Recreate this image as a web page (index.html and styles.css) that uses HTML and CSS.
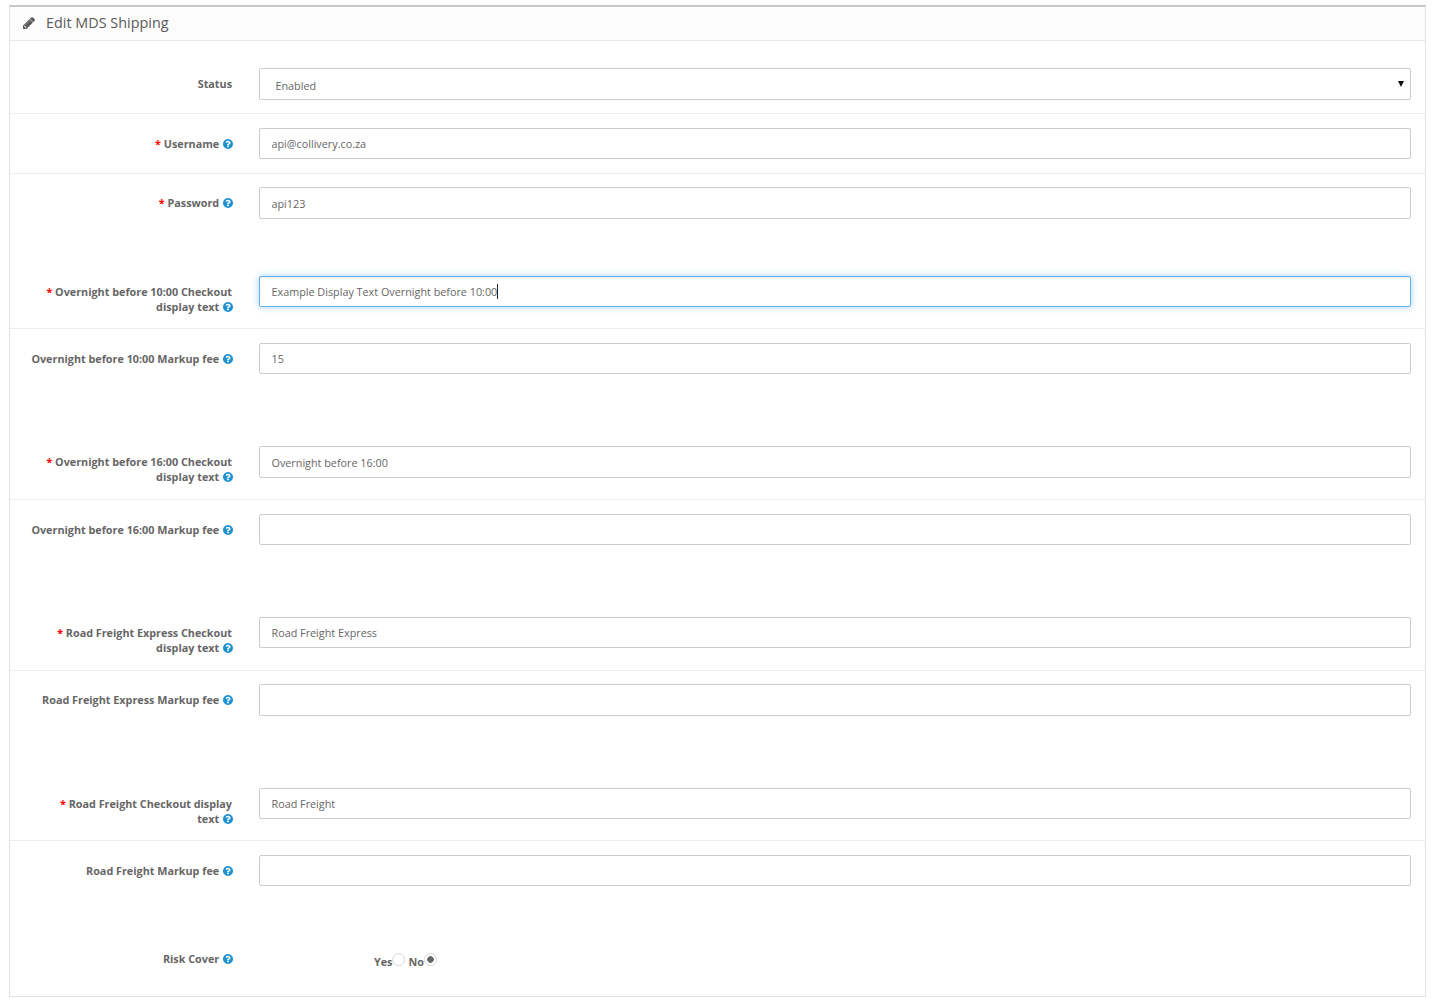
FILE: index.html
```html
<!DOCTYPE html>
<html lang="en">
<head>
<meta charset="utf-8">
<title>Edit MDS Shipping</title>
<link rel="stylesheet" href="styles.css">
</head>
<body>
<svg class="defs" width="0" height="0" aria-hidden="true">
  <symbol id="q" viewBox="128 128 1536 1536"><path d="M1024 1376v-192q0-14-9-23t-23-9h-192q-14 0-23 9t-9 23v192q0 14 9 23t23 9h192q14 0 23-9t9-23zm256-672q0-88-55.5-163t-138.5-116-170-41q-243 0-371 213-15 24 8 42l132 100q7 6 19 6 16 0 25-12 53-68 86-92 34-24 86-24 48 0 85.5 26t37.5 59q0 38-20 61t-68 45q-63 28-115.5 86.5t-52.5 125.5v36q0 14 9 23t23 9h192q14 0 23-9t9-23q0-19 21.5-49.5t54.5-49.5q32-18 49-28.5t46-35 44.5-48 28-60.5 12.5-81zm384 192q0 209-103 385.5t-279.5 279.5-385.5 103-385.5-103-279.5-279.5-103-385.5 103-385.5 279.5-279.5 385.5-103 385.5 103 279.5 279.5 103 385.5z"/></symbol>
</svg>
<main class="panel">
  <header class="panel-heading">
    <svg class="pencil" viewBox="128 128 1536 1536" aria-hidden="true"><path d="M491 1536l91-91-235-235-91 91v107h128v128h107zm523-928q0-22-22-22-10 0-17 7l-542 542q-7 7-7 17 0 22 22 22 10 0 17-7l542-542q7-7 7-17zm-54-192l416 416-832 832h-416v-416zm683 96q0 53-37 90l-166 166-416-416 166-165q36-38 90-38 53 0 91 38l235 234q37 39 37 91z"/></svg>
    <h1 class="panel-title">Edit MDS Shipping</h1>
  </header>
  <form class="form">
    <div class="row row-status sep">
      <label class="lbl">Status</label>
      <div class="select-wrap"><select class="control select"><option>Enabled</option><option>Disabled</option></select></div>
    </div>
    <div class="row row-user sep">
      <label class="lbl"><span class="req">*</span> Username <svg class="q"><use href="#q"/></svg></label>
      <input class="control" value="api@collivery.co.za">
    </div>
    <div class="row row-pass">
      <label class="lbl"><span class="req">*</span> Password <svg class="q"><use href="#q"/></svg></label>
      <input class="control" value="api123">
    </div>
    <div class="row row-text sep">
      <label class="lbl"><span class="req">*</span> Overnight before 10:00 Checkout display text <svg class="q"><use href="#q"/></svg></label>
      <div class="control focused">Example Display Text Overnight before 10:00<span class="caret"></span></div>
    </div>
    <div class="row row-fee row-fee-first">
      <label class="lbl">Overnight before 10:00 Markup fee <svg class="q"><use href="#q"/></svg></label>
      <input class="control" value="15">
    </div>
    <div class="row row-text row-text-second sep">
      <label class="lbl"><span class="req">*</span> Overnight before 16:00 Checkout display text <svg class="q"><use href="#q"/></svg></label>
      <input class="control" value="Overnight before 16:00">
    </div>
    <div class="row row-fee">
      <label class="lbl">Overnight before 16:00 Markup fee <svg class="q"><use href="#q"/></svg></label>
      <input class="control">
    </div>
    <div class="row row-text row-text-wide sep">
      <label class="lbl"><span class="req">*</span> Road Freight Express Checkout display text <svg class="q"><use href="#q"/></svg></label>
      <input class="control" value="Road Freight Express">
    </div>
    <div class="row row-fee row-fee-tall">
      <label class="lbl">Road Freight Express Markup fee <svg class="q"><use href="#q"/></svg></label>
      <input class="control">
    </div>
    <div class="row row-text sep">
      <label class="lbl"><span class="req">*</span> Road Freight Checkout display <span class="nowrap">text <svg class="q"><use href="#q"/></svg></span></label>
      <input class="control" value="Road Freight">
    </div>
    <div class="row row-fee row-fee-last">
      <label class="lbl">Road Freight Markup fee <svg class="q"><use href="#q"/></svg></label>
      <input class="control">
    </div>
    <div class="row row-risk">
      <label class="lbl">Risk Cover <svg class="q"><use href="#q"/></svg></label>
      <div class="radios">
        <label class="radio-label">Yes<input class="radio" type="radio" name="risk"></label>
        <label class="radio-label">No<input class="radio" type="radio" name="risk" checked></label>
      </div>
    </div>
  </form>
</main>
</body>
</html>
```

FILE: styles.css
```css
* { box-sizing: border-box; }
html, body { margin: 0; background: #fff; }
body {
  padding: 5px 18px 0 9px;
  height: 999px;
  overflow: hidden;
  font-family: "Open Sans", sans-serif;
  font-size: 10.8px;
  line-height: 15px;
  color: #666;
}
.defs { position: absolute; }
.panel {
  border: 1px solid #e2e2e2;
  border-top: 2px solid #c8c8c8;
  height: 992px;
}
.panel-heading {
  height: 34px;
  display: flex;
  align-items: center;
  padding: 0 0 2px 13px;
  background: #fcfcfc;
  border-bottom: 1px solid #e8e8e8;
}
.pencil { width: 12px; height: 12px; fill: #595959; stroke: #595959; stroke-width: 40; margin-right: 11px; }
.panel-title { margin: 0; font-size: 14.4px; font-weight: 400; color: #595959; line-height: 20px; }
.row {
  display: grid;
  grid-template-columns: 222px 1152px;
  column-gap: 27px;
  align-items: start;
}
.sep { border-bottom: 1px solid #ededed; }
.row-status { padding: 27px 0 13px; }
.row-user { padding: 13.5px 0 13.5px; }
.row-pass { padding: 13.9px 0 57.1px; }
.row-text { padding: 0 0 20.5px; }
.row-text-wide { padding-bottom: 21.5px; }
.row-text-second { padding-bottom: 21.1px; }
.row-fee { padding: 14px 0 71.5px; }
.row-fee-first { padding-bottom: 71.9px; }
.row-fee-tall { padding: 13.4px 0 72.1px; }
.row-fee-last { padding-bottom: 0; }
.row-risk { padding-top: 57px; }
.lbl { text-align: right; font-weight: 700; padding: 8px 0 0 17px; margin-bottom: -8px; }
.req { color: #f00; }
.nowrap { white-space: nowrap; }
.q { display: inline-block; width: 10px; height: 10px; fill: #1e91cf; vertical-align: -1px; margin: 0 -1px 0 1px; }
.control {
  display: block;
  width: 100%;
  height: 31.5px;
  padding: 0 11.5px;
  border: 1px solid #ccc;
  border-radius: 2px;
  background: #fff;
  font: 400 10.8px/29.5px "Open Sans", sans-serif;
  color: #666;
  outline: 0;
}
.focused {
  border-color: #66afe9;
  box-shadow: inset 0 1px 1px rgba(0,0,0,.075), 0 0 7px rgba(102,175,233,.6);
}
.caret { display: inline-block; width: 1px; height: 15px; background: #222; vertical-align: -3px; }
.select-wrap { position: relative; }
.select-wrap::after {
  content: "";
  position: absolute;
  right: 7px;
  top: 13px;
  border-left: 3px solid transparent;
  border-right: 3px solid transparent;
  border-top: 6px solid #111;
}
.select { appearance: none; height: 32px; padding: 2px 15.5px 0; }
.radios { display: flex; padding: 11px 0 0 115px; }
.radio-label { display: flex; font-weight: 700; margin-right: 3px; }
.radio {
  appearance: none;
  width: 13px;
  height: 13px;
  margin: -1px 0 0;
  border: 1px solid #d8d8d8;
  border-radius: 50%;
  background: #fff;
}
.radio:checked { background: radial-gradient(circle, #666 0, #666 3px, #fff 3.6px); }
```
